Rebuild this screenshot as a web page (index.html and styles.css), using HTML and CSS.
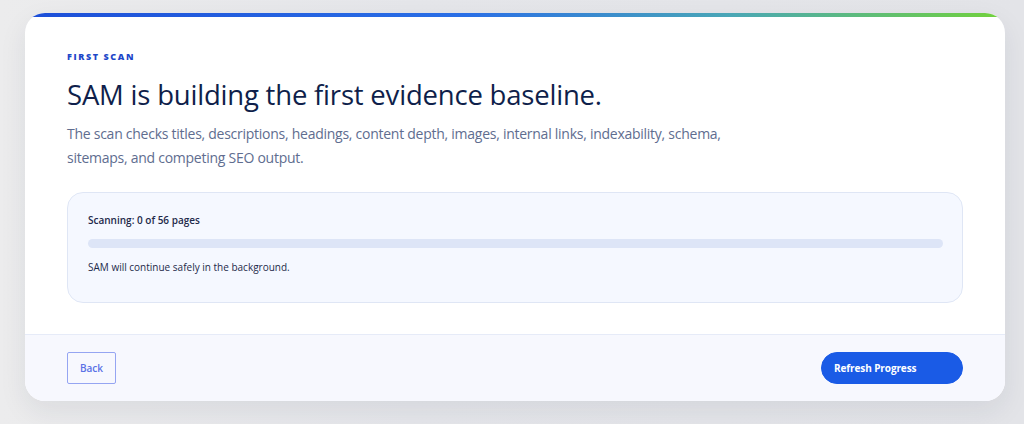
FILE: index.html
```html
<!DOCTYPE html>
<html lang="en">
<head>
    <meta charset="UTF-8">
    <meta name="viewport" content="width=device-width, initial-scale=1.0">
    <title>First Scan</title>
    <link rel="stylesheet" href="styles.css">
</head>
<body>
    <div class="scan-card">
        <div class="scan-body">
            <div class="eyebrow">First Scan</div>
            <h1>SAM is building the first evidence baseline.</h1>
            <p class="lead">
                The scan checks titles, descriptions, headings, content depth, images, internal links, indexability, schema, sitemaps, and competing SEO output.
            </p>

            <div class="progress-panel">
                <div class="progress-label">Scanning: <span id="scannedCount">0</span> of <span id="totalCount">56</span> pages</div>
                <div class="progress-track">
                    <div class="progress-fill" style="width: 0%"></div>
                </div>
                <div class="progress-note">SAM will continue safely in the background.</div>
            </div>
        </div>

        <div class="scan-footer">
            <button class="btn-back" type="button">Back</button>
            <button class="btn-refresh" type="button">Refresh Progress</button>
        </div>
    </div>
</body>
</html>
```

FILE: styles.css
```css
html, body {
    height: 100%;
}

body {
    margin: 0;
    padding: 13px 19px 0 25px;
    box-sizing: border-box;
    font-family: "Open Sans", "Noto Sans", sans-serif;
    background: linear-gradient(90deg, #ececed 0%, #e5e6ea 40%, #e3e4e8 100%);
    color: #0f1f4b;
}

.scan-card {
    position: relative;
    background-color: #fff;
    border-radius: 20px;
    overflow: hidden;
    box-shadow: 0 10px 28px rgba(30, 41, 70, 0.08);
}

/* gradient strip across the top */
.scan-card::before {
    content: "";
    position: absolute;
    top: 0;
    left: 0;
    right: 0;
    height: 4px;
    background: linear-gradient(90deg, #1d4fd8 0%, #2a6fe6 45%, #4aa7b6 72%, #72d23a 100%);
}

.scan-body {
    padding: 38px 42px 31px;
}

.eyebrow {
    font-size: 9px;
    font-weight: 800;
    letter-spacing: 1.6px;
    text-transform: uppercase;
    color: #1d47c9;
    line-height: 12px;
}

h1 {
    margin: 14px 0 0;
    font-size: 27.5px;
    font-weight: 400;
    line-height: 36px;
    color: #0f1f4b;
    letter-spacing: -0.2px;
}

.lead {
    margin: 9px 0 0;
    max-width: 700px;
    font-size: 14px;
    letter-spacing: -0.26px;
    line-height: 24px;
    color: #606d8f;
}

.progress-panel {
    margin-top: 22px;
    padding: 20px 19px 27px 20px;
    background-color: #f5f8ff;
    border: 1px solid #dfe6f5;
    border-radius: 16px;
}

.progress-label {
    font-size: 10px;
    font-weight: 600;
    line-height: 15px;
    color: #1e2a4a;
}

.progress-track {
    margin-top: 11px;
    height: 9px;
    background-color: #dde5f7;
    border-radius: 5px;
    overflow: hidden;
}

.progress-fill {
    height: 100%;
    background-color: #1a5be6;
}

.progress-note {
    margin-top: 12px;
    font-size: 10px;
    line-height: 15px;
    color: #1e2a4a;
}

.scan-footer {
    display: flex;
    justify-content: space-between;
    align-items: center;
    padding: 17px 42px;
    background-color: #f7f8fe;
    border-top: 1px solid #e6ebf8;
}

.scan-footer button {
    font-family: inherit;
    height: 32px;
    font-size: 10px;
    cursor: pointer;
}

.btn-back {
    width: 49px;
    padding: 0;
    background-color: transparent;
    border: 1px solid #95a5f2;
    border-radius: 2px;
    color: #5a72e6;
    font-weight: 600;
}

.btn-refresh {
    width: 142px;
    padding: 0 12px;
    text-align: left;
    background-color: #1a5be6;
    border: 1px solid #1a5be6;
    border-radius: 16px;
    color: #fff;
    font-weight: 700;
    letter-spacing: -0.1px;
}
```
